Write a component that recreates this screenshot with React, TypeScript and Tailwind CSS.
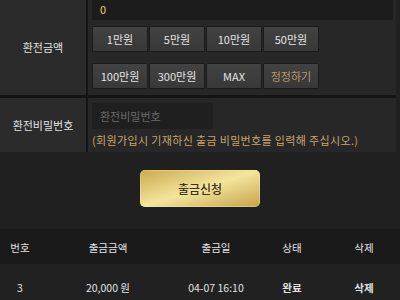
const amounts = [
  ["1만원", "5만원", "10만원", "50만원"],
  ["100만원", "300만원", "MAX", "정정하기"],
];

function AmountButton({ label }: { label: string }) {
  const reset = label === "정정하기";
  return (
    <button
      className={
        "h-[26px] w-[56px] rounded-[1px] border border-[#1b1b1b] bg-gradient-to-b from-[#424242] to-[#383838] text-[11px] " +
        (reset ? "text-[#b89868]" : "text-[#e4e4e4]")
      }
    >
      {label}
    </button>
  );
}

export default function App() {
  return (
    <div
      className="h-[300px] w-[400px] overflow-hidden bg-[#202020]"
      style={{ fontFamily: '"Noto Sans CJK KR", "Noto Sans", sans-serif' }}
    >
      <div className="-mt-[6px] w-[396px] bg-[#141414]">
        <div className="flex border-b-[3px] border-[#141414]">
          <div className="flex w-[86px] items-center justify-center bg-[#2b2b2b] pt-[6px] text-[11px] text-[#e2e2e2]">
            환전금액
          </div>
          <div className="ml-[2px] flex-1 bg-[#272727] pb-[6px] pl-[4px] pr-[3px] pt-[1px]">
            <div className="flex h-[25px] items-center bg-[#1c1c1c] pl-[8px] pt-[3px] text-[11px] text-[#e3d46a]">
              0
            </div>
            <div className="mt-[6px] flex flex-col gap-[11px]">
              {amounts.map((row, i) => (
                <div key={i} className="flex gap-[1px]">
                  {row.map((a) => (
                    <AmountButton key={a} label={a} />
                  ))}
                </div>
              ))}
            </div>
          </div>
        </div>
        <div className="flex">
          <div className="flex w-[86px] items-center justify-center bg-[#2b2b2b] text-[11px] text-[#e2e2e2]">
            환전비밀번호
          </div>
          <div className="ml-[2px] flex-1 bg-[#272727] pb-[3px] pl-[4px] pt-[5px]">
            <div className="flex h-[26px] w-[121px] items-center bg-[#1f1f1f] pl-[8px] text-[11px] text-[#6a6a6a]">
              환전비밀번호
            </div>
            <div className="mt-[2px] text-[11px] leading-[18px] tracking-[0.35px] text-[#c6a46c]">
              (회원가입시 기재하신 출금 비밀번호를 입력해 주십시오.)
            </div>
          </div>
        </div>
      </div>

      <div className="flex justify-center pt-[18px]">
        <button className="h-[37px] w-[120px] rounded-[5px] bg-gradient-to-br from-[#c9a94c] via-[#f4e59c] to-[#c5a247] text-[12px] font-medium text-[#3a3320] shadow-[inset_0_0_0_1px_rgba(255,240,180,0.35)]">
          출금신청
        </button>
      </div>

      <div className="mt-[22px] grid h-[35px] grid-cols-[40px_136px_80px_72px_1fr] items-center bg-[#1a1a1a] pt-[2px] text-center text-[10.5px] text-[#e2e2e2]">
        <div>번호</div>
        <div>출금금액</div>
        <div>출금일</div>
        <div>상태</div>
        <div>삭제</div>
      </div>
      <div className="grid h-[46px] grid-cols-[40px_136px_80px_72px_1fr] items-center bg-[#212121] pt-[2px] text-center text-[10.5px] text-[#e2e2e2]">
        <div>3</div>
        <div>20,000 원</div>
        <div>04-07 16:10</div>
        <div className="font-bold">완료</div>
        <div className="font-bold">삭제</div>
      </div>
    </div>
  );
}
